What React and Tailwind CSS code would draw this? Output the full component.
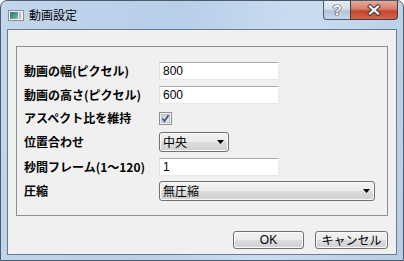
const btnFace =
  'bg-[linear-gradient(#f2f2f2_0%,#ebebeb_50%,#dddddd_50%,#cfcfcf_100%)] shadow-[inset_0_0_0_1px_#fbfbfb]';

function TextBox({ value }) {
  return (
    <div className="flex h-[18px] w-[120px] items-center border border-[#abadb3] border-b-[#e3e9ef] border-l-[#dbdfe6] border-r-[#e3e9ef] bg-white pl-[3px] font-['Liberation_Sans',sans-serif] text-[12px] leading-none text-black">
      {value}
    </div>
  );
}

function ComboBox({ value, className }) {
  return (
    <div
      className={`flex h-[20px] items-center rounded-[3px] border border-[#707070] pl-[3px] text-[12px] leading-none text-black ${btnFace} ${className}`}
    >
      <span>{value}</span>
      <svg className="ml-auto mr-[4px]" width="7" height="4" viewBox="0 0 7 4">
        <path d="M0 0h7L3.5 4z" fill="#000" />
      </svg>
    </div>
  );
}

function CheckBox() {
  return (
    <svg width="13" height="13" viewBox="0 0 13 13">
      <defs>
        <linearGradient id="cbfill" x1="0" y1="0" x2="1" y2="1">
          <stop offset="0" stopColor="#c8ced9" />
          <stop offset="1" stopColor="#eef0f4" />
        </linearGradient>
      </defs>
      <rect x="0.5" y="0.5" width="12" height="12" fill="#f4f4f4" stroke="#8e8f8f" />
      <rect x="2.5" y="2.5" width="8" height="8" fill="url(#cbfill)" stroke="#b8bec8" />
      <path d="M3.5 6.5 L5.5 9 L9.5 3.2" stroke="#3c4f8c" strokeWidth="1.7" fill="none" />
    </svg>
  );
}

function WindowIcon() {
  return (
    <svg width="16" height="11" viewBox="0 0 16 11">
      <defs>
        <linearGradient id="pic" x1="0" y1="0" x2="1" y2="1">
          <stop offset="0" stopColor="#2f6f86" />
          <stop offset="0.5" stopColor="#4a9a7a" />
          <stop offset="1" stopColor="#8fb0c8" />
        </linearGradient>
      </defs>
      <rect x="0.5" y="0.5" width="15" height="10" fill="#f2f2f2" stroke="#8a8f96" />
      <rect x="2" y="2" width="8" height="7" fill="url(#pic)" />
      <rect x="11" y="2" width="2" height="7" fill="#b8bec6" />
    </svg>
  );
}

const rows = [
  { label: '動画の幅(ピクセル)', control: <TextBox value="800" /> },
  { label: '動画の高さ(ピクセル)', control: <TextBox value="600" /> },
  { label: 'アスペクト比を維持', control: <CheckBox /> },
  { label: '位置合わせ', control: <ComboBox value="中央" className="w-[70px]" /> },
  { label: '秒間フレーム(1～120)', control: <TextBox value="1" /> },
  { label: '圧縮', control: <ComboBox value="無圧縮" className="w-[216px]" /> },
];

export default function App() {
  return (
    <div className="h-[261px] w-[404px] overflow-hidden rounded-t-[7px] border border-[#4d5a6a] bg-[linear-gradient(100deg,#c2d6ec_0%,#b8cfe9_40%,#cadcf0_68%,#b6cde8_100%)] font-['Noto_Sans_CJK_JP',sans-serif]">
      {/* title bar */}
      <div className="flex h-[28px] pl-[7px] pr-[5px]">
        <div className="flex items-center gap-[5px]">
          <WindowIcon />
          <span className="text-[12px] leading-none text-black">動画設定</span>
        </div>
        <div className="ml-auto flex self-start">
          <div className="flex h-[19px] w-[27px] items-center justify-center rounded-bl-[4px] border border-t-0 border-r-0 border-[#4b5a6e] bg-[linear-gradient(#e6edf6_0%,#d3deeb_45%,#b3c4d9_55%,#c8d6e7_100%)] pb-[1px] font-['Liberation_Sans',sans-serif] text-[15px] font-bold leading-none text-white [text-shadow:0_0_1px_#222,0_0_1px_#222,0_0_1px_#222]">
            ?
          </div>
          <div className="flex h-[19px] w-[48px] items-center justify-center rounded-br-[4px] border border-t-0 border-[#4b3a3a] bg-[linear-gradient(#e7a898_0%,#d67d69_45%,#c4462e_55%,#d2654e_100%)]">
            <svg width="14" height="12" viewBox="0 0 14 12">
              <path d="M3 2.5 L11 9.5 M11 2.5 L3 9.5" stroke="#3a3a3a" strokeWidth="4.2" strokeLinecap="square" />
              <path d="M3 2.5 L11 9.5 M11 2.5 L3 9.5" stroke="#fff" strokeWidth="2.2" strokeLinecap="square" />
            </svg>
          </div>
        </div>
      </div>

      {/* client area */}
      <div className="mx-[6px] h-[226px] border border-[#6b7a8e] bg-[#f0f0f0] px-[8px] pt-[16px]">
        <div className="h-[170px] border border-[#8c8f95] pl-[7px] pt-[12px]">
          <div className="grid grid-cols-[135px_1fr] grid-rows-[24px_24px_22px_26px_24px_24px] items-center">
            {rows.map((r) => (
              <div key={r.label} className="contents">
                <div className="text-[12px] font-bold leading-none text-black">{r.label}</div>
                <div className="flex items-center">{r.control}</div>
              </div>
            ))}
          </div>
        </div>
        <div className="mt-[15px] flex justify-end gap-[11px]">
          <button className={`h-[18px] w-[71px] rounded-[3px] border border-[#707070] font-['Liberation_Sans',sans-serif] text-[12px] leading-none text-black ${btnFace}`}>
            OK
          </button>
          <button className={`h-[18px] w-[73px] rounded-[3px] border border-[#707070] text-[12px] leading-none text-black ${btnFace}`}>
            キャンセル
          </button>
        </div>
      </div>
    </div>
  );
}
